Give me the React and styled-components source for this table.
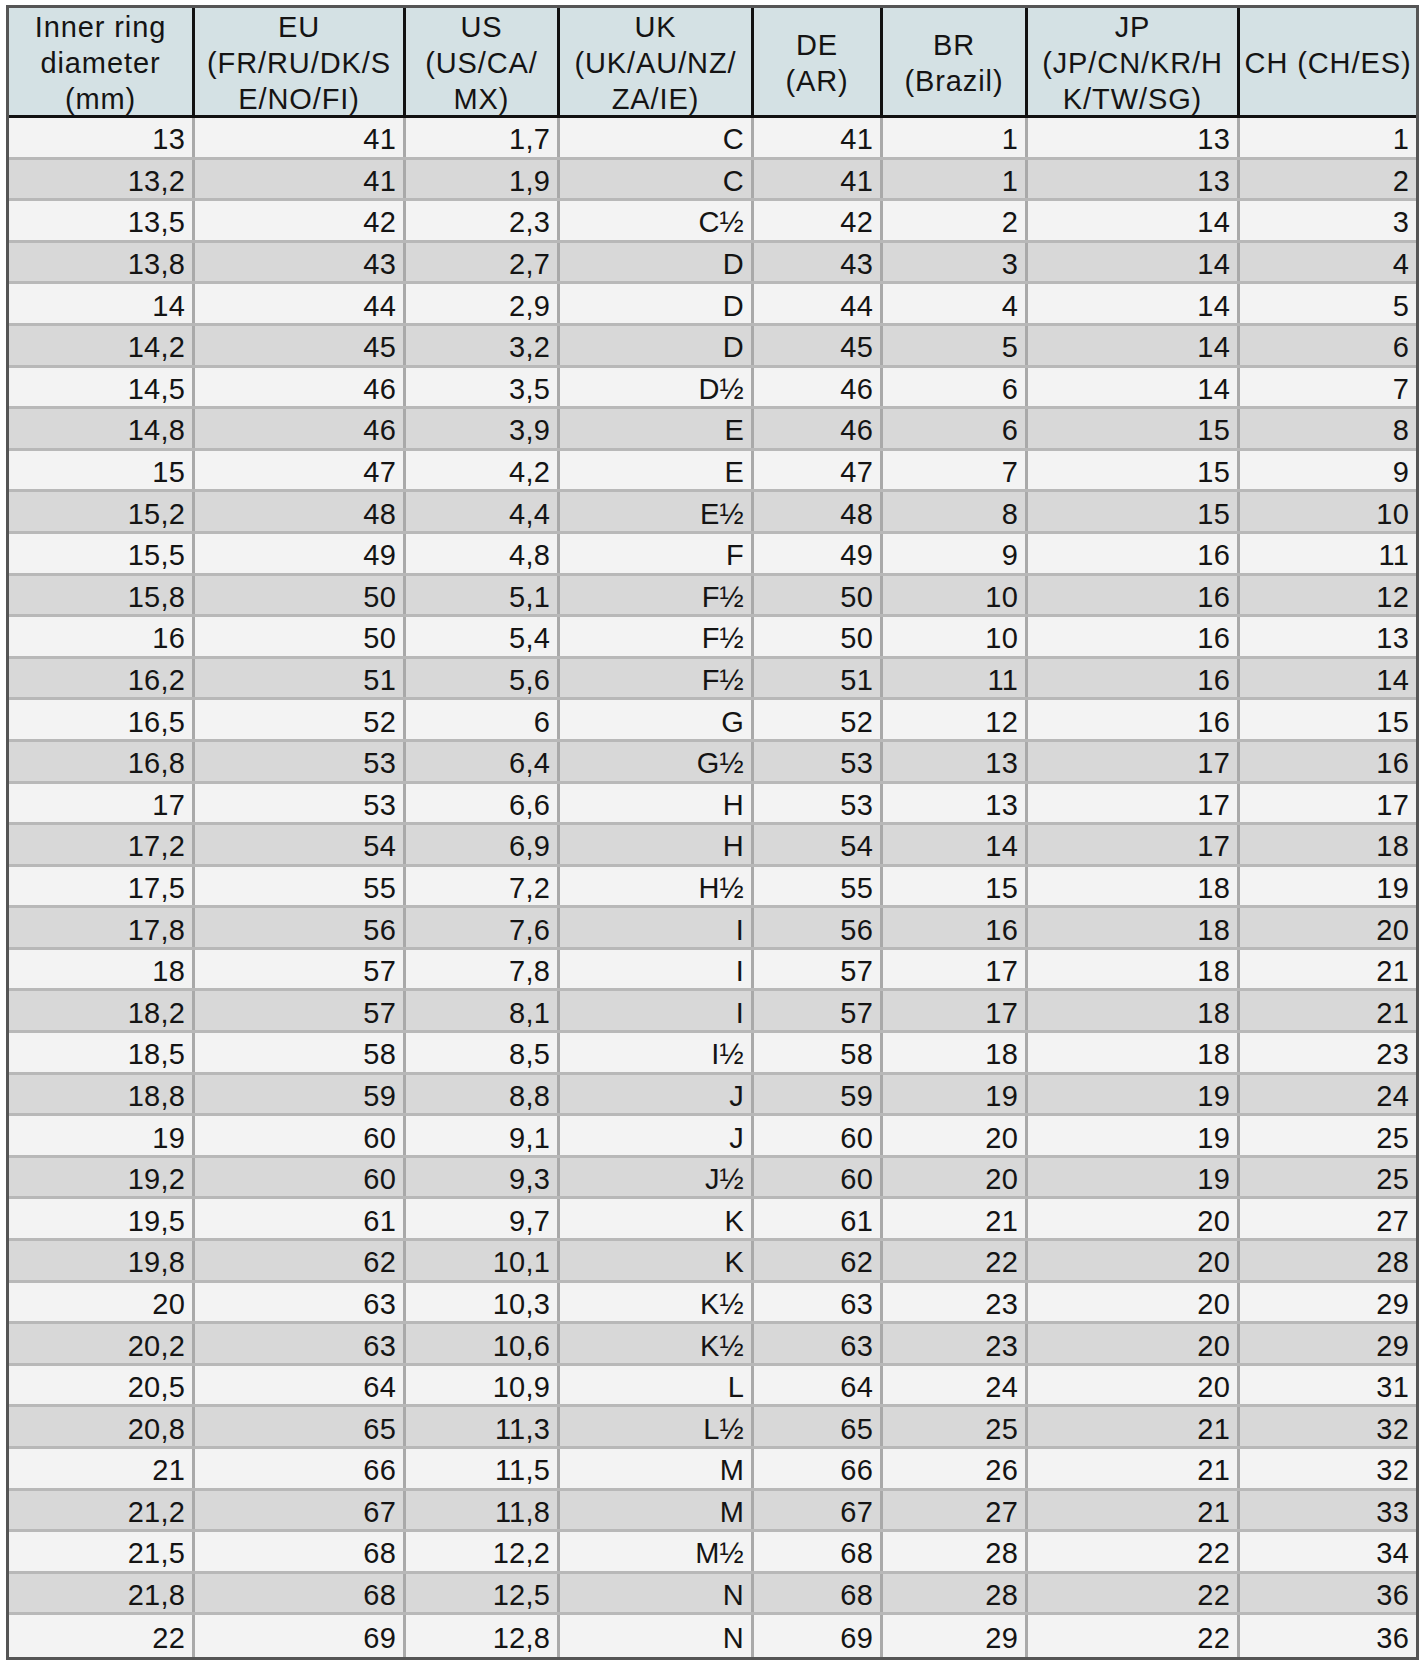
import React from 'react';
import styled, { createGlobalStyle } from 'styled-components';

const GlobalStyle = createGlobalStyle`
  html, body {
    margin: 0;
    padding: 0;
    background: #ffffff;
  }
  body {
    font-family: "Liberation Sans", Arial, sans-serif;
    color: #141414;
  }
`;

const COLUMNS = '186px 211px 154px 194px 129px 145px 212px 176px';

const Page = styled.div`
  padding: 5px 6px;
`;

const Frame = styled.div`
  display: flex;
  flex-direction: column;
  width: max-content;
  border: 3px solid #555;
`;

const HeadRow = styled.div`
  display: grid;
  grid-template-columns: ${COLUMNS};
  height: 110px;
  background: #d4e1e4;
  border-bottom: 3px solid #111;
  box-sizing: border-box;
`;

const HeadCell = styled.div`
  display: flex;
  align-items: center;
  justify-content: center;
  text-align: center;
  font-size: 29px;
  line-height: 36px;
  letter-spacing: 0.9px;
  border-right: 3px solid #111;
  padding-top: 1px;
  &:last-child {
    border-right: none;
  }
`;

const Row = styled.div`
  display: grid;
  grid-template-columns: ${COLUMNS};
  height: 41.6px;
  box-sizing: border-box;
  background: ${(p) => (p.$shaded ? '#d8d8d8' : '#f3f3f3')};
  border-bottom: 3px solid #b8b8b8;
  &:last-child {
    border-bottom: none;
  }
`;

const Cell = styled.div`
  display: flex;
  align-items: center;
  justify-content: flex-end;
  padding: 5px 7px 0 0;
  font-size: 29px;
  letter-spacing: 0.2px;
  border-right: 3px solid #a9a9a9;
  &:last-child {
    border-right: none;
  }
`;

const headers = [
  ['Inner ring', 'diameter', '(mm)'],
  ['EU', '(FR/RU/DK/S', 'E/NO/FI)'],
  ['US', '(US/CA/', 'MX)'],
  ['UK', '(UK/AU/NZ/', 'ZA/IE)'],
  ['DE', '(AR)'],
  ['BR', '(Brazil)'],
  ['JP', '(JP/CN/KR/H', 'K/TW/SG)'],
  ['CH (CH/ES)'],
];

const rows = [
  ['13', '41', '1,7', 'C', '41', '1', '13', '1'],
  ['13,2', '41', '1,9', 'C', '41', '1', '13', '2'],
  ['13,5', '42', '2,3', 'C½', '42', '2', '14', '3'],
  ['13,8', '43', '2,7', 'D', '43', '3', '14', '4'],
  ['14', '44', '2,9', 'D', '44', '4', '14', '5'],
  ['14,2', '45', '3,2', 'D', '45', '5', '14', '6'],
  ['14,5', '46', '3,5', 'D½', '46', '6', '14', '7'],
  ['14,8', '46', '3,9', 'E', '46', '6', '15', '8'],
  ['15', '47', '4,2', 'E', '47', '7', '15', '9'],
  ['15,2', '48', '4,4', 'E½', '48', '8', '15', '10'],
  ['15,5', '49', '4,8', 'F', '49', '9', '16', '11'],
  ['15,8', '50', '5,1', 'F½', '50', '10', '16', '12'],
  ['16', '50', '5,4', 'F½', '50', '10', '16', '13'],
  ['16,2', '51', '5,6', 'F½', '51', '11', '16', '14'],
  ['16,5', '52', '6', 'G', '52', '12', '16', '15'],
  ['16,8', '53', '6,4', 'G½', '53', '13', '17', '16'],
  ['17', '53', '6,6', 'H', '53', '13', '17', '17'],
  ['17,2', '54', '6,9', 'H', '54', '14', '17', '18'],
  ['17,5', '55', '7,2', 'H½', '55', '15', '18', '19'],
  ['17,8', '56', '7,6', 'I', '56', '16', '18', '20'],
  ['18', '57', '7,8', 'I', '57', '17', '18', '21'],
  ['18,2', '57', '8,1', 'I', '57', '17', '18', '21'],
  ['18,5', '58', '8,5', 'I½', '58', '18', '18', '23'],
  ['18,8', '59', '8,8', 'J', '59', '19', '19', '24'],
  ['19', '60', '9,1', 'J', '60', '20', '19', '25'],
  ['19,2', '60', '9,3', 'J½', '60', '20', '19', '25'],
  ['19,5', '61', '9,7', 'K', '61', '21', '20', '27'],
  ['19,8', '62', '10,1', 'K', '62', '22', '20', '28'],
  ['20', '63', '10,3', 'K½', '63', '23', '20', '29'],
  ['20,2', '63', '10,6', 'K½', '63', '23', '20', '29'],
  ['20,5', '64', '10,9', 'L', '64', '24', '20', '31'],
  ['20,8', '65', '11,3', 'L½', '65', '25', '21', '32'],
  ['21', '66', '11,5', 'M', '66', '26', '21', '32'],
  ['21,2', '67', '11,8', 'M', '67', '27', '21', '33'],
  ['21,5', '68', '12,2', 'M½', '68', '28', '22', '34'],
  ['21,8', '68', '12,5', 'N', '68', '28', '22', '36'],
  ['22', '69', '12,8', 'N', '69', '29', '22', '36'],
];

export default function App() {
  return (
    <Page>
      <GlobalStyle />
      <Frame>
        <HeadRow>
          {headers.map((lines, i) => (
            <HeadCell key={i}>
              <div>
                {lines.map((line, j) => (
                  <div key={j}>{line}</div>
                ))}
              </div>
            </HeadCell>
          ))}
        </HeadRow>
        {rows.map((row, i) => (
          <Row key={i} $shaded={i % 2 === 1}>
            {row.map((value, j) => (
              <Cell key={j}>{value}</Cell>
            ))}
          </Row>
        ))}
      </Frame>
    </Page>
  );
}
